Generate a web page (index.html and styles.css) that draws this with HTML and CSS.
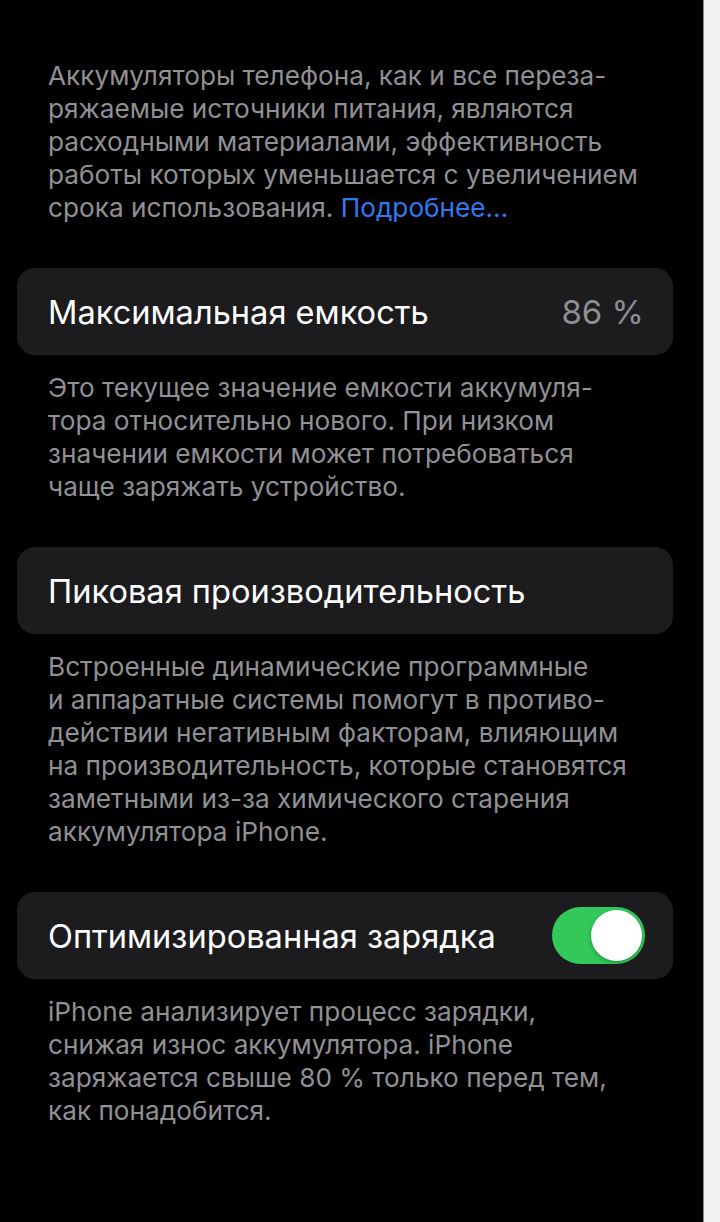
FILE: index.html
```html
<!DOCTYPE html>
<html lang="ru">
<head>
<meta charset="utf-8">
<link rel="stylesheet" href="styles.css">
</head>
<body>
<div class="page">
  <main class="screen">
    <p class="note">Аккумуляторы телефона, как и все переза-<br>ряжаемые источники питания, являются<br>расходными материалами, эффективность<br>работы которых уменьшается с увеличением<br>срока использования. <span class="link">Подробнее…</span></p>

    <div class="card">
      <span class="title">Максимальная емкость</span>
      <span class="value">86 %</span>
    </div>
    <p class="note after">Это текущее значение емкости аккумуля-<br>тора относительно нового. При низком<br>значении емкости может потребоваться<br>чаще заряжать устройство.</p>

    <div class="card">
      <span class="title">Пиковая производительность</span>
    </div>
    <p class="note after">Встроенные динамические программные<br>и аппаратные системы помогут в противо-<br>действии негативным факторам, влияющим<br>на производительность, которые становятся<br>заметными из-за химического старения<br>аккумулятора iPhone.</p>

    <div class="card">
      <span class="title">Оптимизированная зарядка</span>
      <span class="toggle"><span class="knob"></span></span>
    </div>
    <p class="note after">iPhone анализирует процесс зарядки,<br>снижая износ аккумулятора. iPhone<br>заряжается свыше 80 % только перед тем,<br>как понадобится.</p>
  </main>
  <aside class="strip"></aside>
</div>
</body>
</html>
```

FILE: styles.css
```css
html, body {
  margin: 0;
  padding: 0;
  background: #000;
}
.page {
  display: flex;
  width: 720px;
  height: 1222px;
  overflow: hidden;
}
.screen {
  width: 703px;
  flex: none;
  background: #000;
  padding: 59px 30px 0 17px;
  box-sizing: border-box;
  font-family: Inter, "Noto Sans", sans-serif;
}
.strip {
  flex: 1;
  background: #f2f2f4;
  border-left: 1px solid #8a8a8e;
}
.note {
  margin: 0 0 44px 0;
  padding: 0 0 0 31px;
  color: #909095;
  font-size: 26.2px;
  line-height: 33px;
  white-space: nowrap;
}
.note.after {
  margin-top: 16px;
}
.link {
  color: #3478f0;
}
.card {
  height: 87px;
  width: 656px;
  background: #1c1c1e;
  border-radius: 18px;
  display: flex;
  align-items: center;
  justify-content: space-between;
  padding: 0 29px 0 31px;
  box-sizing: border-box;
}
.title {
  color: #fff;
  font-size: 32.6px;
}
.value {
  color: #8e8e93;
  font-size: 33px;
}
.toggle {
  width: 93px;
  height: 57px;
  border-radius: 29px;
  background: #32c85a;
  display: flex;
  align-items: center;
  justify-content: flex-end;
  padding: 0 3px;
  box-sizing: border-box;
  margin-right: -1px;
}
.knob {
  width: 51px;
  height: 51px;
  border-radius: 50%;
  background: #fff;
  box-shadow: 0 2px 4px rgba(0,0,0,0.25);
}
```
